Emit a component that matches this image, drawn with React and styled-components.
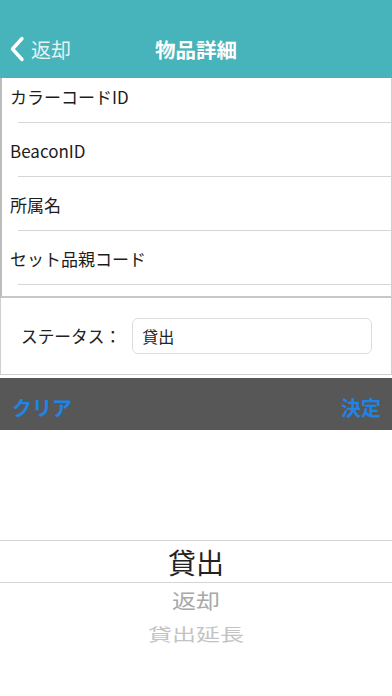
import styled, { createGlobalStyle } from "styled-components";

const GlobalStyle = createGlobalStyle`
  body {
    margin: 0;
    background: #ffffff;
    font-family: "Noto Sans CJK JP", "Noto Sans", sans-serif;
  }
`;

const rows = ["カラーコードID", "BeaconID", "所属名", "セット品親コード"];

export default function App() {
  return (
    <Page>
      <GlobalStyle />
      <Header>
        <BackButton>
          <svg width="16" height="26" viewBox="0 0 16 26">
            <path
              d="M13 2.5 L3.5 13 L13 23.5"
              fill="none"
              stroke="#ffffff"
              strokeWidth="3.4"
              strokeLinecap="round"
              strokeLinejoin="round"
            />
          </svg>
          <span>返却</span>
        </BackButton>
        <Title>物品詳細</Title>
        <div />
      </Header>

      <ListViewport>
        <ListContent>
          {rows.map((r) => (
            <Row key={r}>{r}</Row>
          ))}
        </ListContent>
      </ListViewport>

      <StatusSection>
        <StatusLabel>ステータス：</StatusLabel>
        <StatusInput>貸出</StatusInput>
      </StatusSection>

      <Toolbar>
        <ToolButton>クリア</ToolButton>
        <ToolButton>決定</ToolButton>
      </Toolbar>

      <Picker>
        <PickerSpacer />
        <PickerItem $level={0}>貸出</PickerItem>
        <PickerItem $level={1}>返却</PickerItem>
        <PickerItem $level={2}>貸出延長</PickerItem>
      </Picker>
    </Page>
  );
}

const Page = styled.div`
  width: 392px;
  height: 696px;
  display: flex;
  flex-direction: column;
  overflow: hidden;
`;

const Header = styled.div`
  height: 78px;
  box-sizing: border-box;
  padding-top: 20px;
  background: #47b3ba;
  display: grid;
  grid-template-columns: 1fr auto 1fr;
  align-items: center;
`;

const BackButton = styled.div`
  display: flex;
  align-items: center;
  gap: 6px;
  padding-left: 9px;
  color: #ffffff;
  font-size: 20px;
  span {
    opacity: 0.85;
  }
`;

const Title = styled.div`
  color: #ffffff;
  font-size: 20.5px;
  font-weight: 700;
`;

const ListViewport = styled.div`
  height: 220px;
  overflow: hidden;
  box-sizing: border-box;
  border-left: 2px solid #bdbdbd;
  border-right: 1px solid #cfcfcf;
  border-bottom: 2px solid #c8c8c8;
`;

const ListContent = styled.div`
  margin-top: -9px;
`;

const Row = styled.div`
  height: 54px;
  box-sizing: border-box;
  display: flex;
  align-items: center;
  padding-left: 8px;
  font-size: 17px;
  color: #1c1c1c;
  position: relative;
  &::after {
    content: "";
    position: absolute;
    left: 16px;
    right: 0;
    bottom: 0;
    height: 1px;
    background: #d6d6d6;
  }
`;

const StatusSection = styled.div`
  height: 77px;
  box-sizing: border-box;
  border-left: 1px solid #cfcfcf;
  border-right: 1px solid #cfcfcf;
  border-bottom: 1px solid #cfcfcf;
  display: flex;
  align-items: center;
  padding: 0 19px 0 20px;
  gap: 11px;
  margin-bottom: 3px;
`;

const StatusLabel = styled.div`
  font-size: 16.7px;
  color: #222222;
  white-space: nowrap;
`;

const StatusInput = styled.div`
  flex: 1;
  height: 36px;
  box-sizing: border-box;
  border: 1px solid #dcdcdc;
  border-radius: 6px;
  display: flex;
  align-items: center;
  padding-left: 9px;
  font-size: 16px;
  color: #222222;
`;

const Toolbar = styled.div`
  height: 52px;
  box-sizing: border-box;
  background: #575757;
  display: flex;
  align-items: center;
  justify-content: space-between;
  padding: 7px 11px 0 12px;
`;

const ToolButton = styled.div`
  color: #1f84e6;
  font-size: 20px;
  font-weight: 700;
`;

const Picker = styled.div`
  flex: 1;
  display: flex;
  flex-direction: column;
  align-items: stretch;
`;

const PickerSpacer = styled.div`
  height: 110px;
`;

const levels = [
  { size: 28, color: "#222222", height: 43, squash: 1 },
  { size: 24, color: "#a9a9a9", height: 34, squash: 0.85 },
  { size: 24, color: "#c3c3c3", height: 32, squash: 0.72 },
];

const PickerItem = styled.div`
  height: ${(p) => levels[p.$level].height}px;
  box-sizing: border-box;
  display: flex;
  align-items: center;
  justify-content: center;
  font-size: ${(p) => levels[p.$level].size}px;
  color: ${(p) => levels[p.$level].color};
  transform: scaleY(${(p) => levels[p.$level].squash});
  border-top: ${(p) => (p.$level === 0 ? "1px solid #d4d4d4" : "none")};
  border-bottom: ${(p) => (p.$level === 0 ? "1px solid #d4d4d4" : "none")};
`;
